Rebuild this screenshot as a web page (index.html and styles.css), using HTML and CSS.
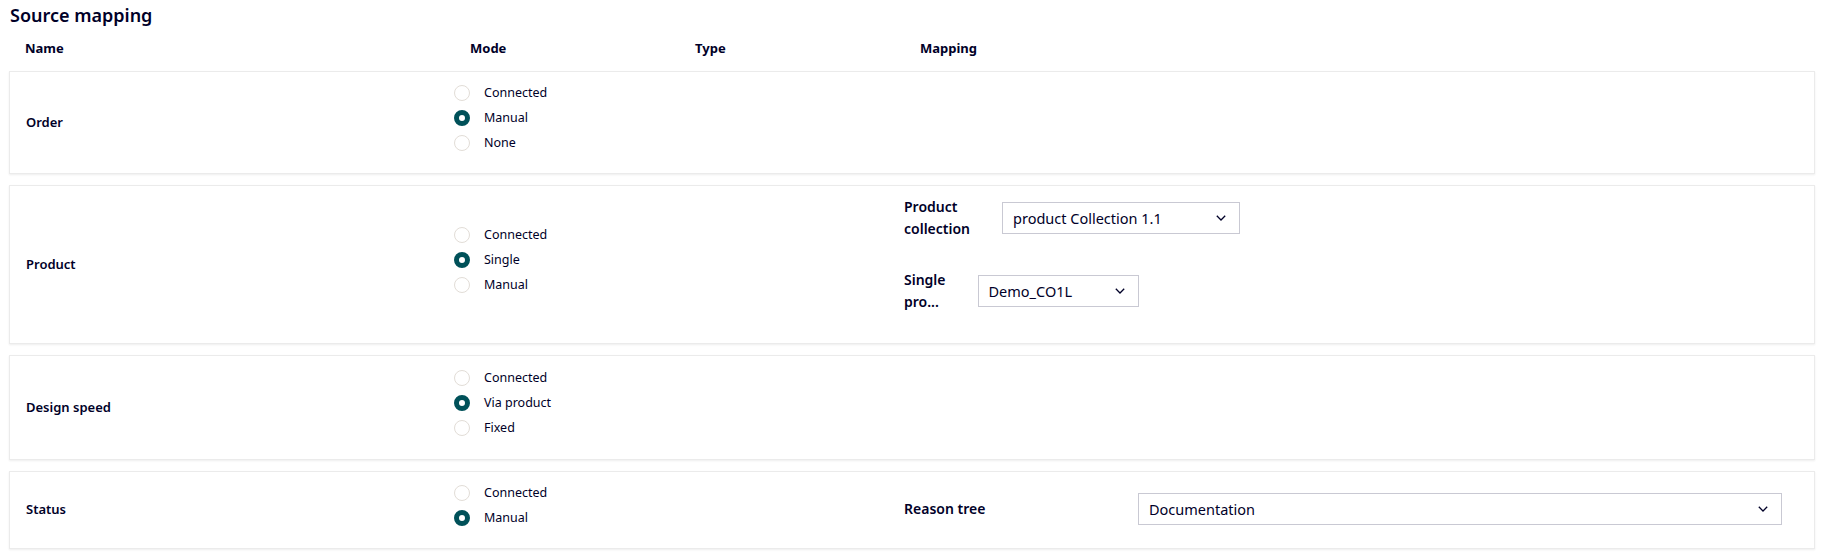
FILE: index.html
```html
<!DOCTYPE html>
<html>
<head>
  <title>Source mapping</title>
  <link rel="stylesheet" href="styles.css">
</head>
<body>
  <div class="page">
    <h1 class="title">Source mapping</h1>

    <div class="grid-head">
      <div>Name</div>
      <div>Mode</div>
      <div>Type</div>
      <div>Mapping</div>
    </div>

    <div class="card">
      <div class="row-name">Order</div>
      <div class="modes">
        <label class="radio"><input type="radio" name="order">Connected</label>
        <label class="radio"><input type="radio" name="order" checked>Manual</label>
        <label class="radio"><input type="radio" name="order">None</label>
      </div>
      <div class="row-type"></div>
      <div class="mapping"></div>
    </div>

    <div class="card">
      <div class="row-name">Product</div>
      <div class="modes">
        <label class="radio"><input type="radio" name="product">Connected</label>
        <label class="radio"><input type="radio" name="product" checked>Single</label>
        <label class="radio"><input type="radio" name="product">Manual</label>
      </div>
      <div class="row-type"></div>
      <div class="mapping mapping-stack">
        <div class="field">
          <div class="field-label">Product<br>collection</div>
          <div class="select select-collection">
            <span>product Collection 1.1</span>
            <svg width="10" height="6" viewBox="0 0 10 6"><path d="M0.8 0.8L5 5L9.2 0.8" fill="none" stroke="#000028" stroke-width="1.3"/></svg>
          </div>
        </div>
        <div class="field">
          <div class="field-label" title="Single product">Single<br>pro...</div>
          <div class="select select-single">
            <span>Demo_CO1L</span>
            <svg width="10" height="6" viewBox="0 0 10 6"><path d="M0.8 0.8L5 5L9.2 0.8" fill="none" stroke="#000028" stroke-width="1.3"/></svg>
          </div>
        </div>
      </div>
    </div>

    <div class="card card-tall">
      <div class="row-name">Design speed</div>
      <div class="modes">
        <label class="radio"><input type="radio" name="speed">Connected</label>
        <label class="radio"><input type="radio" name="speed" checked>Via product</label>
        <label class="radio"><input type="radio" name="speed">Fixed</label>
      </div>
      <div class="row-type"></div>
      <div class="mapping"></div>
    </div>

    <div class="card">
      <div class="row-name">Status</div>
      <div class="modes">
        <label class="radio"><input type="radio" name="status">Connected</label>
        <label class="radio"><input type="radio" name="status" checked>Manual</label>
      </div>
      <div class="row-type"></div>
      <div class="mapping">
        <div class="field field-wide">
          <div class="field-label">Reason tree</div>
          <div class="select select-wide">
            <span>Documentation</span>
            <svg width="10" height="6" viewBox="0 0 10 6"><path d="M0.8 0.8L5 5L9.2 0.8" fill="none" stroke="#000028" stroke-width="1.3"/></svg>
          </div>
        </div>
      </div>
    </div>
  </div>
</body>
</html>
```

FILE: styles.css
```css
body {
  margin: 0;
  background: #fff;
  font-family: "Noto Sans", "Open Sans", sans-serif;
  color: #000028;
}
.page {
  padding: 0 6px 0 9px;
}
.title {
  margin: 0;
  padding: 3px 0 0 1px;
  font-size: 18px;
  line-height: 24px;
  font-weight: 600;
}
.grid-head {
  display: grid;
  grid-template-columns: 445px 225px 225px 1fr;
  padding: 12px 0 14px 16px;
  font-size: 13px;
  line-height: 18px;
  font-weight: 700;
}
.card {
  display: grid;
  grid-template-columns: 428px 225px 225px 1fr;
  align-items: center;
  padding: 8px 32px 10px 16px;
  margin-bottom: 11px;
  border: 1px solid #ebebeb;
  box-shadow: 0 1px 2px rgba(0, 0, 0, 0.07);
}
.card-tall {
  padding-top: 9px;
  padding-bottom: 11px;
}
.row-name {
  font-size: 13px;
  font-weight: 600;
}
.modes {
  display: flex;
  flex-direction: column;
  padding-bottom: 8px;
}
.radio {
  display: flex;
  align-items: center;
  gap: 14px;
  height: 25px;
  font-size: 12.5px;
}
.radio input {
  appearance: none;
  -webkit-appearance: none;
  margin: 0;
  width: 16px;
  height: 16px;
  border-radius: 50%;
  border: 1px solid #e2ddd7;
  background: #fff;
}
.radio input:checked {
  border: 5px solid #005159;
}
.mapping-stack {
  display: flex;
  flex-direction: column;
  gap: 29px;
  padding-top: 2px;
  padding-bottom: 20px;
}
.field {
  display: flex;
  align-items: center;
  gap: 32px;
}
.field-label {
  font-size: 14px;
  line-height: 22px;
  font-weight: 600;
}
.field-wide .field-label {
  flex: 0 0 234px;
}
.field-wide {
  gap: 0;
}
.select {
  box-sizing: border-box;
  display: flex;
  align-items: center;
  justify-content: space-between;
  height: 32px;
  padding: 0 13px 0 10px;
  border: 1px solid #c9c9d3;
  font-size: 14.5px;
}
.select-collection {
  width: 238px;
}
.select-single {
  width: 161px;
}
.select-wide {
  flex: 1;
}
```
